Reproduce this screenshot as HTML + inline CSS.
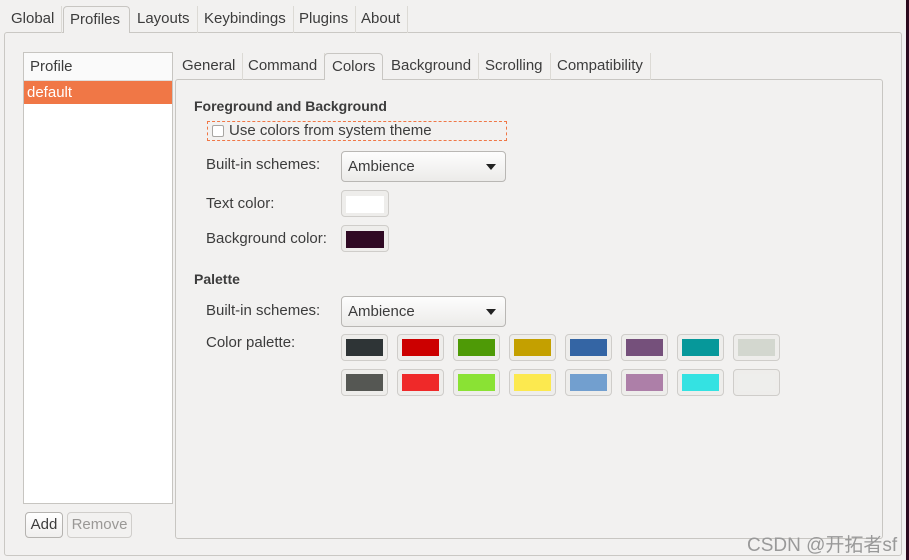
<!DOCTYPE html>
<html><head><meta charset="utf-8"><style>
*{box-sizing:border-box;margin:0;padding:0}
body{width:909px;height:560px;background:#f2f1f0;font-family:"Liberation Sans","Noto Sans CJK SC",sans-serif;font-size:15px;color:#3c3c3c;position:relative;overflow:hidden}
.a{position:absolute;white-space:nowrap}
.tab{position:absolute;height:27px;line-height:26px;padding:0 7px;border-right:1px solid #dcdad5}
.act{background:#f4f3f2;border:1px solid #c8c6c2;border-bottom:none;border-radius:4px 4px 0 0}
.sw{position:absolute;width:47px;height:27px;border:1px solid #cfcdca;border-radius:4px;background:#eeedeb}
.sw i{position:absolute;left:4px;top:4px;width:37px;height:17px}
.combo{position:absolute;width:165px;height:31px;border:1px solid #b9b7b4;border-radius:4px;background:linear-gradient(#fdfdfd,#ecebe9);padding-left:6px;line-height:29px;font-size:15px}
.combo:after{content:"";position:absolute;right:9px;top:12px;border-left:5px solid transparent;border-right:5px solid transparent;border-top:6px solid #222}
</style></head><body>
<div class="a" style="left:906px;top:0;width:3px;height:560px;background:#2c0a1e"></div>
<div class="a" style="left:4px;top:32px;width:898px;height:524px;border:1px solid #cac8c4;border-radius:3px"></div>
<div class="tab" style="left:4px;top:6px">Global</div>
<div class="tab act" style="left:63px;top:6px;width:67px;height:27px;background:#f2f1f0;padding:0 6px">Profiles</div>
<div class="tab" style="left:130px;top:6px">Layouts</div>
<div class="tab" style="left:197px;top:6px">Keybindings</div>
<div class="tab" style="left:292px;top:6px">Plugins</div>
<div class="tab" style="left:354px;top:6px">About</div>

<div class="a" style="left:23px;top:52px;width:150px;height:452px;background:#fff;border:1px solid #c7c5c1"></div>
<div class="a" style="left:24px;top:53px;width:148px;height:28px;line-height:28px;padding-left:6px;background:#fafafa;border-bottom:1px solid #e0dedb">Profile</div>
<div class="a" style="left:24px;top:81px;width:148px;height:23px;line-height:23px;padding-left:3px;background:#f07746;color:#fff">default</div>
<div class="a" style="left:25px;top:512px;width:38px;height:26px;border:1px solid #b5b3b0;border-radius:4px;background:linear-gradient(#fff,#f0efee);text-align:center;line-height:24px">Add</div>
<div class="a" style="left:67px;top:512px;width:65px;height:26px;border:1px solid #d0cecb;border-radius:4px;text-align:center;line-height:24px;color:#9a9896">Remove</div>

<div class="a" style="left:175px;top:79px;width:708px;height:460px;border:1px solid #c8c6c2;border-radius:3px"></div>
<div class="tab" style="left:175px;top:53px">General</div>
<div class="tab" style="left:241px;top:53px">Command</div>
<div class="tab act" style="left:324px;top:53px;height:27px;background:#f2f1f0">Colors</div>
<div class="tab" style="left:384px;top:53px">Background</div>
<div class="tab" style="left:478px;top:53px">Scrolling</div>
<div class="tab" style="left:550px;top:53px">Compatibility</div>

<div class="a" style="left:194px;top:98px;font-weight:bold;font-size:14px">Foreground and Background</div>
<div class="a" style="left:207px;top:121px;width:300px;height:20px;border:1px dashed #f07746"></div>
<div class="a" style="left:212px;top:125px;width:12px;height:12px;border:1px solid #a8a6a3;border-radius:2px;background:#fff"></div>
<div class="a" style="left:229px;top:122px">Use colors from system theme</div>
<div class="a" style="left:206px;top:156px">Built-in schemes:</div>
<div class="combo" style="left:341px;top:151px">Ambience</div>
<div class="a" style="left:206px;top:195px">Text color:</div>
<div class="sw" style="left:341px;top:190px;width:48px"><i style="background:#fff;width:38px;top:5px"></i></div>
<div class="a" style="left:206px;top:230px">Background color:</div>
<div class="sw" style="left:341px;top:225px;width:48px"><i style="background:#300a24;width:38px;top:5px"></i></div>

<div class="a" style="left:194px;top:271px;font-weight:bold;font-size:14px">Palette</div>
<div class="a" style="left:206px;top:302px">Built-in schemes:</div>
<div class="combo" style="left:341px;top:296px">Ambience</div>
<div class="a" style="left:206px;top:334px">Color palette:</div>

<div class="sw" style="left:341px;top:334px"><i style="background:#2e3436"></i></div>
<div class="sw" style="left:397px;top:334px"><i style="background:#cc0000"></i></div>
<div class="sw" style="left:453px;top:334px"><i style="background:#4e9a06"></i></div>
<div class="sw" style="left:509px;top:334px"><i style="background:#c4a000"></i></div>
<div class="sw" style="left:565px;top:334px"><i style="background:#3465a4"></i></div>
<div class="sw" style="left:621px;top:334px"><i style="background:#75507b"></i></div>
<div class="sw" style="left:677px;top:334px"><i style="background:#06989a"></i></div>
<div class="sw" style="left:733px;top:334px"><i style="background:#d3d7cf"></i></div>
<div class="sw" style="left:341px;top:369px"><i style="background:#555753"></i></div>
<div class="sw" style="left:397px;top:369px"><i style="background:#ef2929"></i></div>
<div class="sw" style="left:453px;top:369px"><i style="background:#8ae234"></i></div>
<div class="sw" style="left:509px;top:369px"><i style="background:#fce94f"></i></div>
<div class="sw" style="left:565px;top:369px"><i style="background:#729fcf"></i></div>
<div class="sw" style="left:621px;top:369px"><i style="background:#ad7fa8"></i></div>
<div class="sw" style="left:677px;top:369px"><i style="background:#34e2e2"></i></div>
<div class="sw" style="left:733px;top:369px"><i style="background:#eeeeec"></i></div>

<div class="a" style="left:747px;top:530px;font-size:19px;color:#999">CSDN @开拓者sf</div>
</body></html>
